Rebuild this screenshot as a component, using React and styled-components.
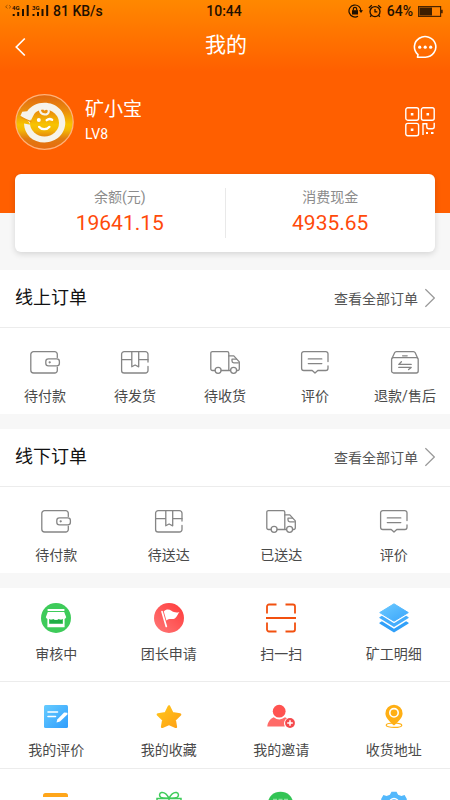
import React from 'react'
import styled, { createGlobalStyle } from 'styled-components'

const GlobalStyle = createGlobalStyle`
    * {
        box-sizing: border-box;
    }
    body {
        margin: 0;
        background-color: #f7f7f7;
        font-family: Roboto, "Noto Sans CJK SC", sans-serif;
        color: #4a4a4a;
    }
    button {
        border: none;
        background: none;
        padding: 0;
        font: inherit;
        color: inherit;
        cursor: pointer;
    }
    svg {
        display: block;
    }
`
const Screen = styled.div`
    height: 100vh;
    overflow: hidden;
`
const Hero = styled.header`
    background: linear-gradient(#ff8800, #ff5f00 72px);
    padding-bottom: 63px;
    color: #fff;
`
const StatusBar = styled.div`
    display: grid;
    grid-template-columns: 1fr auto 1fr;
    align-items: center;
    height: 22px;
    padding: 0 7px 0 5px;
    font-size: 14px;
    font-weight: 500;
    color: #1f1000;
`
const StatusGroup = styled.div`
    display: flex;
    align-items: center;
    justify-content: ${({end}) => end ? "flex-end" : "flex-start"};
    gap: ${({end}) => end ? "5px" : "4px"};
`
const NavBar = styled.nav`
    display: flex;
    align-items: center;
    justify-content: space-between;
    height: 48px;
    padding: 2px 13px 0 15px;
`
const Title = styled.h1`
    margin: 0;
    padding-bottom: 4px;
    font-size: 21px;
    line-height: 28px;
    font-weight: 400;
`
const NavButton = styled.button`
    display: flex;
    width: 24px;
    justify-content: ${({end}) => end ? "flex-end" : "flex-start"};
`
const Profile = styled.div`
    display: flex;
    align-items: center;
    gap: 11px;
    padding: 24px 15px 0;
`
const UserInfo = styled.div`
    flex: 1;
    padding-bottom: 4px;
`
const UserName = styled.h2`
    margin: 0;
    font-size: 19px;
    line-height: 28px;
    font-weight: 400;
`
const Level = styled.div`
    font-size: 14px;
    line-height: 20px;
`
const Card = styled.section`
    position: relative;
    display: flex;
    margin: -39px 15px 18px;
    padding: 14px 0;
    background-color: #fff;
    border-radius: 6px;
    box-shadow: 0 2px 6px rgba(0, 0, 0, 0.14);
`
const Balance = styled.div`
    flex: 1;
    display: flex;
    flex-direction: column;
    align-items: center;
    gap: 2px;
    height: 50px;

    & + & {
        border-left: 1px solid #e9e9e9;
    }
`
const BalanceLabel = styled.div`
    font-size: 14px;
    line-height: 18px;
    color: #8c8c8c;
`
const Amount = styled.div`
    font-size: 21px;
    line-height: 30px;
    color: #ff4a0a;
`
const Section = styled.section`
    margin-bottom: 15px;
    background-color: #fff;
`
const SectionHeader = styled.div`
    display: flex;
    align-items: center;
    justify-content: space-between;
    height: 58px;
    padding: 0 15px 2px;
    border-bottom: 1px solid #ececec;
`
const SectionTitle = styled.h2`
    margin: 0;
    font-size: 18px;
    line-height: 26px;
    font-weight: 400;
    color: #111;
`
const MoreLink = styled.a`
    display: flex;
    align-items: center;
    gap: 7px;
    font-size: 14px;
    color: #555;
    text-decoration: none;
`
const Row = styled.div`
    display: flex;
    border-bottom: ${({line}) => line ? "1px solid #ececec" : "none"};
`
const Item = styled.button`
    flex: 1 1 0;
    display: flex;
    flex-direction: column;
    align-items: center;
    gap: ${({large}) => large ? "11px" : "12px"};
    padding: ${({large}) => large ? "15px 0 17px" : "22px 0 8px"};
    font-size: 14px;
    line-height: 20px;
`

const Line = ({children}) => (
    <svg width="32" height="24" viewBox="-1 0 32 24" fill="none" stroke="#858585" strokeWidth="1.3" strokeLinecap="round" strokeLinejoin="round">
        {children}
    </svg>
)

const WalletIcon = () => (
    <Line>
        <path d="M27.3 7.5V4.2a2.6 2.6 0 0 0-2.6-2.6H3.6A2.8 2.8 0 0 0 .8 4.4v15.8A2.8 2.8 0 0 0 3.6 23h21.1a2.600 2.600 0 0 0 2.600-2.600v-3.200" />
        <rect x="15.8" y="8.800" width="13.600" height="7" rx="2.600" />
        <circle cx="19.700" cy="12.300" r=".5" fill="#858585" />
    </Line>
)

const BoxIcon = () => (
    <Line>
        <path d="M28 12V4.200a2.600 2.600 0 0 0-2.600-2.600H4.200a2.600 2.600 0 0 0-2.600 2.600v16.200A2.600 2.600 0 0 0 4.200 23h21.200a2.600 2.600 0 0 0 2.600-2.600v-4" />
        <path d="M11.800 1.600v15.200l3.300-1.800 3.600 1.800V1.600M1.600 9.700h10.200M18.700 9.700H28" />
    </Line>
)

const TruckIcon = () => (
    <Line>
        <path d="M5 20.500H2.400A1.600 1.600 0 0 1 .8 18.900V3.200a1.600 1.600 0 0 1 1.600-1.600h14.800a1.600 1.600 0 0 1 1.600 1.600v17.300M11.200 20.500H20.500" />
        <path d="M18.800 5.900h5l5.500 6v7a1.600 1.600 0 0 1-1.600 1.600h-1" />
        <path d="M28.400 12.800h-4.600a1.800 1.800 0 0 1-1.800-1.800V9.200h4.400" />
        <circle cx="8.100" cy="20.300" r="3" />
        <circle cx="23.600" cy="20.300" r="3" />
    </Line>
)

const CommentIcon = () => (
    <Line>
        <path d="M28 11.500V3.800a2.200 2.200 0 0 0-2.200-2.200h-22a2.200 2.200 0 0 0-2.200 2.200v14.500a2.200 2.200 0 0 0 2.200 2.200h8.400l2.800 2.600 2.800-2.600h8a2.200 2.200 0 0 0 2.200-2.200v-2.300" />
        <path d="M8.300 8.900h13.500M8.300 13.600h13.500" />
    </Line>
)

const RefundIcon = () => (
    <Line>
        <rect x="1.600" y="7.600" width="26.600" height="15.400" rx="2" />
        <path d="M2.200 8l2.400-5.200a2 2 0 0 1 1.800-1.200h17a2 2 0 0 1 1.800 1.200L27.600 8M12.600 5.800h4.600" />
        <path d="M21.200 14.400H8.800l2.600-2.600M8.800 17.400h12.400l-2.600 2.200" />
    </Line>
)

const ShopIcon = () => (
    <svg width="30" height="30" viewBox="0 0 30 30">
        <circle cx="15" cy="15" r="15" fill="#3ecb5a" />
        <path d="M6.600 6h16.800v2H6.600z" fill="#fff" />
        <path d="M6.800 9h16.400l2 5.200a2.600 2.600 0 0 1-3.400 1.500 3 3 0 0 1-4.200.3 3.300 3.300 0 0 1-5.200 0 3 3 0 0 1-4.200-.3 2.600 2.600 0 0 1-3.400-1.500z" fill="#fff" />
        <path d="M7.200 15v8.400h15.600V15" fill="none" stroke="#fff" strokeWidth="1.600" />
        <path d="M9 16.500h12v4.200H9z" fill="#1fae45" />
        <path d="M8 20.800h14V23H8z" fill="#fff" />
        <path d="M7.500 14.300a2.500 2.500 0 0 0 4.500 1 3.500 3.500 0 0 0 6 0 2.500 2.500 0 0 0 4.500-1z" fill="#fff" />
    </svg>
)

const FlagIcon = () => (
    <svg width="30" height="30" viewBox="0 0 30 30">
        <defs>
            <linearGradient id="flag" x1="1" y1="0" x2="0" y2="1">
                <stop offset="0" stopColor="#ff3a3a" />
                <stop offset="1" stopColor="#ff7878" />
            </linearGradient>
        </defs>
        <circle cx="15" cy="15" r="15" fill="url(#flag)" />
        <path d="M8 8.600l4.300 14.800" stroke="#fff" strokeWidth="1.700" strokeLinecap="round" />
        <path d="M9.800 8.400c2.500-2.600 5.400-2.200 7.600-.6 2.200 1.600 5.200 2.300 8 1.200-1.600 2-2.200 4.600-4.600 6.400-2.400 1.700-5.600-.6-8.400 2.200z" fill="#fff" />
    </svg>
)

const ScanIcon = () => (
    <svg width="30" height="30" viewBox="0 0 30 30" fill="none" stroke="#f2500f" strokeWidth="1.800">
        <path d="M10.500 1.500H3A2 2 0 0 0 1 3.500v7M19.500 1.500H27a2 2 0 0 1 2 2v7M10.500 28.500H3a2 2 0 0 1-2-2v-7M19.500 28.500H27a2 2 0 0 0 2-2v-7M0 15h30" />
    </svg>
)

const LayersIcon = () => (
    <svg width="30" height="30" viewBox="0 0 30 30">
        <defs>
            <linearGradient id="layers" x1="0" y1="0" x2="1" y2="1">
                <stop offset="0" stopColor="#6ccaff" />
                <stop offset="1" stopColor="#3aa5fb" />
            </linearGradient>
        </defs>
        <path d="M15 .8L29.300 9.600 15 18.200.7 9.600z" fill="url(#layers)" stroke="url(#layers)" strokeLinejoin="round" />
        <path d="M.4 14.200l2.500-1.400L15 20.200l12.100-7.400 2.500 1.400v.8L15 24 .4 15z" fill="#45adfc" />
        <path d="M.4 19.700l2.500-1.400L15 25.700l12.100-7.400 2.500 1.400v.8L15 29.400.4 20.500z" fill="#31a0f9" />
    </svg>
)

const ReviewIcon = () => (
    <svg width="24" height="24" viewBox="0 0 24 24">
        <defs>
            <linearGradient id="review" x1="0" y1="0" x2="1" y2="1">
                <stop offset="0" stopColor="#66ccff" />
                <stop offset="1" stopColor="#2f9dfd" />
            </linearGradient>
        </defs>
        <rect y="1" width="24" height="23" rx="1.500" fill="url(#review)" />
        <path d="M4 8h9.500M4 12.500h7.500" stroke="#fff" strokeWidth="1.600" strokeLinecap="round" />
        <path d="M12.500 18.600l.8-3.200 6.800-6.900 3.200.3.300 1.500-7.600 7.200z" fill="#fff" />
    </svg>
)

const StarIcon = () => (
    <svg width="26" height="24" viewBox="0 0 26 24">
        <defs>
            <linearGradient id="gold" x1="0" y1="0" x2="1" y2="1">
                <stop offset="0" stopColor="#ffc61c" />
                <stop offset="1" stopColor="#ffa015" />
            </linearGradient>
        </defs>
        <path d="M13 2.500l3.300 6.700 7.700 1.300-5.400 5.300 1.200 7L13 19.800l-6.800 3 1.200-7L2 10.500l7.700-1.300z" fill="url(#gold)" stroke="url(#gold)" strokeWidth="2.600" strokeLinejoin="round" />
    </svg>
)

const InviteIcon = () => (
    <svg width="28" height="24" viewBox="0 0 28 24">
        <circle cx="12.200" cy="7.200" r="6.400" fill="#ff5350" />
        <path d="M.3 22.500c.3-4.200 2.700-7.600 6.400-9.300a9.300 9.300 0 0 0 11.300.1l2 .9a6 6 0 0 0-2.200 8.300z" fill="#ff6b68" />
        <circle cx="23" cy="19" r="4.900" fill="#f5494c" />
        <path d="M20.200 19h5.600M23 16.200v5.600" stroke="#fff" strokeWidth="1.500" />
    </svg>
)

const AddressIcon = () => (
    <svg width="18" height="24" viewBox="0 0 18 24">
        <ellipse cx="9" cy="21.200" rx="7.800" ry="2.200" fill="none" stroke="#ffb21a" strokeWidth="1.200" />
        <path d="M9 .8a8.600 8.600 0 0 1 8.600 8.600c0 4.400-4.600 8-8.600 12.200C5 17.400.4 13.800.4 9.400A8.600 8.600 0 0 1 9 .8z" fill="#ffaf14" />
        <circle cx="9" cy="8.800" r="4.200" fill="none" stroke="#fff" strokeWidth="1.600" />
    </svg>
)

const CouponIcon = () => (
    <svg width="26" height="24" viewBox="0 0 26 24">
        <path d="M0 6V4.500A2.500 2.500 0 0 1 2.500 2h20A2.500 2.500 0 0 1 25 4.500V6z" fill="#ffa61a" />
        <path d="M0 9h25v13a2 2 0 0 1-2 2H2a2 2 0 0 1-2-2z" fill="#ffb62a" />
    </svg>
)

const GiftIcon = () => (
    <svg width="26" height="24" viewBox="0 0 26 24" fill="none" stroke="#3ecb5a" strokeWidth="1.500">
        <path d="M13 7.200C10.500 2.500 8 1 5.500 1.500 3 2.200 3 5 5 6.400c2 1.200 5 .8 8 .8zM13 7.200c2.500-4.700 5-6.200 7.500-5.700C23 2.200 23 5 21 6.400c-2 1.200-5 .8-8 .8z" />
        <path d="M1 7.600h24v4H1zM3 11.600h20V23H3zM13 7.600V23" />
    </svg>
)

const ServiceIcon = () => (
    <svg width="26" height="24" viewBox="0 0 26 24">
        <ellipse cx="12.500" cy="12" rx="12.500" ry="11.200" fill="#33c455" />
        <path d="M5 8.500h15" stroke="#8be29d" strokeWidth="1.500" strokeDasharray="4 1.500" />
    </svg>
)

const SettingIcon = () => (
    <svg width="26" height="24" viewBox="0 0 26 24">
        <path d="M10.500.8h5l1.600 3 3.300 1.300 3.200-1 2.400 4.200-2.200 3v2.400l2.200 3-2.400 4.200-3.200-1-3.300 1.300-1.600 2.600h-5l-1.600-2.600-3.300-1.300-3.200 1L0 16.700l2.200-3v-2.400L0 8.300l2.400-4.200 3.200 1 3.300-1.300z" fill="#52b8fc" />
        <circle cx="13" cy="12" r="4.500" fill="none" stroke="#fff" strokeWidth="1.500" />
    </svg>
)

const ChevronIcon = () => (
    <svg width="10" height="20" viewBox="0 0 10 20" fill="none" stroke="#999" strokeWidth="1.200">
        <path d="M.4 1.200L9.300 10 .4 18.800" />
    </svg>
)

const SignalIcon = () => (
    <svg width="44" height="14" viewBox="5 4 44 14" fill="#1f1000">
        <path d="M7.500 5.200L5.600 6.800l1.900 1.600M9 5.200l1.900 1.600L9 8.400" fill="none" stroke="#8a4a00" strokeWidth=".8" />
        <text x="12" y="9.500" fontSize="6" fontWeight="700">4G</text>
        <path d="M12.700 14h2v2h-2zM17.200 12h2v4h-2zM22 9h2v7h-2zM26.700 5h2v11h-2z" />
        <text x="32" y="9.500" fontSize="6" fontWeight="700">3G</text>
        <path d="M32.500 14h2v2h-2zM37 12h2v4h-2zM41.500 9h2v7h-2zM46.200 5h2v11h-2z" />
    </svg>
)

const RotationLockIcon = () => (
    <svg width="15" height="14" viewBox="0 0 15 14" fill="none" stroke="#1f1000" strokeWidth="1.200">
        <path d="M13 7a6 6 0 1 0-3 5.200" />
        <path d="M10.900 6.200h4.200L13 9z" fill="#1f1000" stroke="none" />
        <path d="M4 6.200h6v4.300H4z" fill="#1f1000" stroke="none" />
        <path d="M5.300 6.500V5a1.700 1.700 0 0 1 3.400 0v1.500" />
    </svg>
)

const AlarmIcon = () => (
    <svg width="14" height="14" viewBox="0 0 14 14" fill="none" stroke="#1f1000" strokeWidth="1.300">
        <circle cx="7" cy="7.600" r="5" />
        <path d="M7 5v2.900h2.300M.9 4L3.800 1.300M13.100 4l-2.900-2.700M3.500 11.200l-1.300 1.500M10.500 11.200l1.300 1.500" />
    </svg>
)

const BatteryIcon = () => (
    <svg width="25" height="11" viewBox="0 0 25 11">
        <rect x=".6" y=".6" width="22" height="9.800" fill="none" stroke="#4a2400" strokeWidth="1.200" />
        <path d="M1.500 1.500h12.500v8H1.500z" fill="#3d1e00" />
        <path d="M23 3.800h1.700v3.400H23z" fill="#4a2400" />
    </svg>
)

const BackIcon = () => (
    <svg width="11" height="20" viewBox="0 0 11 20" fill="none" stroke="#fff" strokeWidth="1.700">
        <path d="M9.800 1.500L1.300 10l8.500 8.500" />
    </svg>
)

const MessageIcon = () => (
    <svg width="24" height="24" viewBox="0 0 24 24" fill="#fff">
        <path d="M4.500 22.200h8A10.700 10.300 0 1 0 5 19.600z" fill="none" stroke="#fff" strokeWidth="1.600" strokeLinejoin="round" />
        <circle cx="6.700" cy="12.200" r="1.600" />
        <circle cx="12.200" cy="12.200" r="1.600" />
        <circle cx="17.700" cy="12.200" r="1.600" />
    </svg>
)

const QrIcon = () => (
    <svg width="30" height="30" viewBox="0 0 30 30" fill="none" stroke="#fff" strokeWidth="1.400">
        <rect x=".8" y=".8" width="12.800" height="12.400" rx="2" />
        <rect x="16.400" y=".8" width="12.800" height="12.400" rx="2" />
        <rect x=".8" y="16.400" width="12.800" height="12.400" rx="2" />
        <path d="M18 28V16.800h3.800v3a2 2 0 0 0 2 2h3.400a2 2 0 0 0 2-2v-4" />
        <path d="M5.800 6h2.600v2.400H5.800zM21.500 6h2.600v2.400h-2.600zM5.800 21.500h2.600v2.400H5.800zM21 25h2v2h-2zM26 25h2.500v2H26z" fill="#fff" stroke="none" />
    </svg>
)

const Avatar = () => (
    <svg width="59" height="56" viewBox="0 0 59 56">
        <defs>
            <linearGradient id="avatar" gradientUnits="userSpaceOnUse" x1="0" y1="0" x2="0" y2="56">
                <stop offset="0" stopColor="#e06410" />
                <stop offset=".3" stopColor="#ea8c0c" />
                <stop offset=".55" stopColor="#f8c400" />
                <stop offset=".64" stopColor="#f4b806" />
                <stop offset=".8" stopColor="#e07a10" />
                <stop offset="1" stopColor="#e86a10" />
            </linearGradient>
        </defs>
        <ellipse cx="29.500" cy="28" rx="28.700" ry="27.300" fill="url(#avatar)" stroke="#ffb27a" strokeWidth="1.200" />
        <path d="M5.500 21.800l1.700-4 5-.6C16 12 22 8.800 29.300 8.800c12 0 21 8.600 21 19.800s-9 19.900-20.800 19.900-20.200-8-20.500-19l6.500 1.200c-2-3.500-5.600-6.500-10-8.900z" fill="#f6f3ea" />
        <ellipse cx="29.500" cy="29" rx="14.500" ry="13.500" fill="url(#avatar)" />
        <path d="M5.500 21.400c5-1.600 9-3.400 14.500-2.900l-3.900 7.400z" fill="#f6f3ea" />
        <path d="M5.800 23.200l10.600 4.700" stroke="#ea9410" strokeWidth="1.200" />
        <path d="M24.800 15.500c.5 6.300 9 6.300 9 1.800 0-3-3.200-3.600-4.300-2" fill="none" stroke="#f6f3ea" strokeWidth="2.200" strokeLinecap="round" />
        <circle cx="23.800" cy="26" r="2" fill="#fff" />
        <path d="M31.700 26.200c1.800-1.600 3.600-1.600 5.400-.4" fill="none" stroke="#fff" strokeWidth="2.400" strokeLinecap="round" />
        <path d="M24 32.800c2.500 3.200 8 3.200 10.500 0" fill="none" stroke="#fff" strokeWidth="2.200" strokeLinecap="round" />
    </svg>
)

const onlineOrders = [
    { label: "待付款", Icon: WalletIcon },
    { label: "待发货", Icon: BoxIcon },
    { label: "待收货", Icon: TruckIcon },
    { label: "评价", Icon: CommentIcon },
    { label: "退款/售后", Icon: RefundIcon },
]

const offlineOrders = [
    { label: "待付款", Icon: WalletIcon },
    { label: "待送达", Icon: BoxIcon },
    { label: "已送达", Icon: TruckIcon },
    { label: "评价", Icon: CommentIcon },
]

const tools = [
    { label: "审核中", Icon: ShopIcon },
    { label: "团长申请", Icon: FlagIcon },
    { label: "扫一扫", Icon: ScanIcon },
    { label: "矿工明细", Icon: LayersIcon },
]

const mine = [
    { label: "我的评价", Icon: ReviewIcon },
    { label: "我的收藏", Icon: StarIcon },
    { label: "我的邀请", Icon: InviteIcon },
    { label: "收货地址", Icon: AddressIcon },
]

const Items = ({items, large, line}) => (
    <Row line={line}>
        {items.map(({label, Icon}) => (
            <Item key={label} large={large}>
                <Icon/>
                {label}
            </Item>
        ))}
    </Row>
)

const Orders = ({title, items}) => (
    <Section>
        <SectionHeader>
            <SectionTitle>{title}</SectionTitle>
            <MoreLink href="#orders">
                查看全部订单
                <ChevronIcon/>
            </MoreLink>
        </SectionHeader>
        <Items items={items}/>
    </Section>
)

export default function App() {
  return (
    <Screen>
        <GlobalStyle/>
        <Hero>
            <StatusBar>
                <StatusGroup>
                    <SignalIcon/>
                    81 KB/s
                </StatusGroup>
                <div>10:44</div>
                <StatusGroup end>
                    <RotationLockIcon/>
                    <AlarmIcon/>
                    64%
                    <BatteryIcon/>
                </StatusGroup>
            </StatusBar>
            <NavBar>
                <NavButton aria-label="返回"><BackIcon/></NavButton>
                <Title>我的</Title>
                <NavButton end aria-label="消息"><MessageIcon/></NavButton>
            </NavBar>
            <Profile>
                <Avatar/>
                <UserInfo>
                    <UserName>矿小宝</UserName>
                    <Level>LV8</Level>
                </UserInfo>
                <button aria-label="二维码"><QrIcon/></button>
            </Profile>
        </Hero>
        <Card>
            <Balance>
                <BalanceLabel>余额(元)</BalanceLabel>
                <Amount>19641.15</Amount>
            </Balance>
            <Balance>
                <BalanceLabel>消费现金</BalanceLabel>
                <Amount>4935.65</Amount>
            </Balance>
        </Card>
        <Orders title="线上订单" items={onlineOrders}/>
        <Orders title="线下订单" items={offlineOrders}/>
        <Section>
            <Items items={tools} large line/>
            <Items items={mine} line/>
            <Row>
                <Item aria-label="优惠券"><CouponIcon/></Item>
                <Item aria-label="礼品"><GiftIcon/></Item>
                <Item aria-label="客服"><ServiceIcon/></Item>
                <Item aria-label="设置"><SettingIcon/></Item>
            </Row>
        </Section>
    </Screen>
  )
}
